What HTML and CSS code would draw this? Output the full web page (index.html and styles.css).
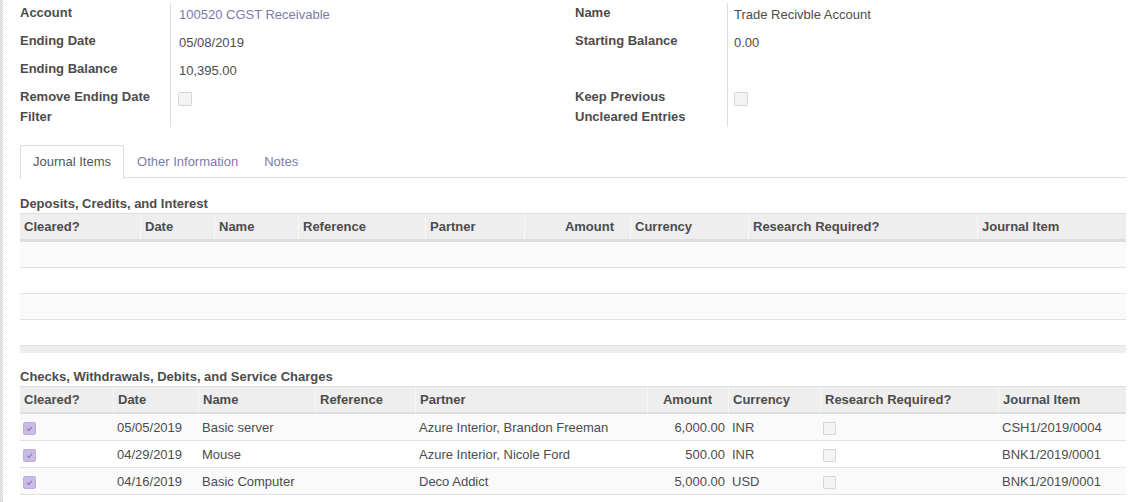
FILE: index.html
```html
<!DOCTYPE html>
<html>
<head>
<meta charset="utf-8">
<link rel="stylesheet" href="styles.css">
</head>
<body>
<div class="layout">
  <div class="edge"></div>
  <div class="sheet">
    <div class="groups">
      <div class="fgroup left">
        <div class="lbl">Account</div><div class="val"><span class="link">100520 CGST Receivable</span></div>
        <div class="lbl">Ending Date</div><div class="val">05/08/2019</div>
        <div class="lbl">Ending Balance</div><div class="val">10,395.00</div>
        <div class="lbl last">Remove Ending Date Filter</div><div class="val last"><span class="chk"></span></div>
      </div>
      <div class="fgroup right">
        <div class="lbl">Name</div><div class="val">Trade Recivble Account</div>
        <div class="lbl">Starting Balance</div><div class="val">0.00</div>
        <div class="lbl">&nbsp;</div><div class="val">&nbsp;</div>
        <div class="lbl last">Keep Previous Uncleared Entries</div><div class="val last"><span class="chk"></span></div>
      </div>
    </div>

    <div class="tabs">
      <div class="tab active">Journal Items</div>
      <div class="tab">Other Information</div>
      <div class="tab">Notes</div>
    </div>

    <div class="sec-title first">Deposits, Credits, and Interest</div>
    <table class="list t1">
      <colgroup><col><col><col><col><col><col><col><col><col></colgroup>
      <thead>
        <tr><th>Cleared?</th><th>Date</th><th>Name</th><th>Reference</th><th>Partner</th><th class="num">Amount</th><th>Currency</th><th>Research Required?</th><th>Journal Item</th></tr>
      </thead>
      <tbody>
        <tr><td>&nbsp;</td><td></td><td></td><td></td><td></td><td></td><td></td><td></td><td></td></tr>
        <tr><td>&nbsp;</td><td></td><td></td><td></td><td></td><td></td><td></td><td></td><td></td></tr>
        <tr><td>&nbsp;</td><td></td><td></td><td></td><td></td><td></td><td></td><td></td><td></td></tr>
        <tr><td>&nbsp;</td><td></td><td></td><td></td><td></td><td></td><td></td><td></td><td></td></tr>
      </tbody>
      <tfoot>
        <tr><td colspan="9"><div class="foot"></div></td></tr>
      </tfoot>
    </table>

    <div class="sec-title second">Checks, Withdrawals, Debits, and Service Charges</div>
    <table class="list t2">
      <colgroup><col><col><col><col><col><col><col><col><col></colgroup>
      <thead>
        <tr><th>Cleared?</th><th>Date</th><th>Name</th><th>Reference</th><th>Partner</th><th class="num">Amount</th><th>Currency</th><th>Research Required?</th><th>Journal Item</th></tr>
      </thead>
      <tbody>
        <tr><td class="cb"><span class="chk on"><svg viewBox="0 0 12 12"><polyline points="3.5,6.3 5.3,8 8.6,4.3"/></svg></span></td><td>05/05/2019</td><td>Basic server</td><td></td><td>Azure Interior, Brandon Freeman</td><td class="num">6,000.00</td><td>INR</td><td class="cb"><span class="chk"></span></td><td>CSH1/2019/0004</td></tr>
        <tr><td class="cb"><span class="chk on"><svg viewBox="0 0 12 12"><polyline points="3.5,6.3 5.3,8 8.6,4.3"/></svg></span></td><td>04/29/2019</td><td>Mouse</td><td></td><td>Azure Interior, Nicole Ford</td><td class="num">500.00</td><td>INR</td><td class="cb"><span class="chk"></span></td><td>BNK1/2019/0001</td></tr>
        <tr><td class="cb"><span class="chk on"><svg viewBox="0 0 12 12"><polyline points="3.5,6.3 5.3,8 8.6,4.3"/></svg></span></td><td>04/16/2019</td><td>Basic Computer</td><td></td><td>Deco Addict</td><td class="num">5,000.00</td><td>USD</td><td class="cb"><span class="chk"></span></td><td>BNK1/2019/0001</td></tr>
      </tbody>
    </table>
  </div>
</div>
</body>
</html>
```

FILE: styles.css
```css
* { box-sizing: border-box; }
html, body { margin: 0; padding: 0; background: #fff; }
body {
  font-family: "Liberation Sans", Arial, sans-serif;
  font-size: 13px;
  color: #4c4c4c;
}
.layout { display: flex; min-height: 502px; }
.edge {
  width: 3px;
  flex: none;
  background-image:
    linear-gradient(45deg, #cfcfcf 25%, transparent 25%, transparent 75%, #cfcfcf 75%),
    linear-gradient(45deg, #cfcfcf 25%, #f2f2f2 25%, #f2f2f2 75%, #cfcfcf 75%);
  background-size: 2px 2px;
  background-position: 0 0, 1px 1px;
}
.sheet { flex: 1; padding: 3px 14px 0 17px; overflow: hidden; }

/* form groups */
.groups { display: grid; grid-template-columns: 555px 1fr; }
.fgroup { display: grid; }
.fgroup.left { grid-template-columns: 151px 1fr; }
.fgroup.right { grid-template-columns: 153px 1fr; }
.lbl {
  font-weight: bold;
  line-height: 20px;
  padding: 0 10px 8px 0;
  border-right: 1px solid #ddd;
}
.val { line-height: 20px; padding: 2px 0 6px 8px; color: #4c4c4c; }
.fgroup.right .val { padding-left: 6px; }
.lbl.last { padding-bottom: 0; }
.val.last { padding-bottom: 0; padding-top: 5px; }
.fgroup.left .val.last { padding-left: 7px; }
.link { color: #7c7bad; }
.chk {
  display: inline-block;
  width: 14px;
  height: 14px;
  border: 1px solid #d6d6d6;
  background: #f4f4f4;
  border-radius: 1px;
  vertical-align: top;
}

/* tabs */
.tabs {
  display: flex;
  margin-top: 18px;
  border-bottom: 1px solid #ddd;
  height: 33px;
}
.tab {
  padding: 6px 12px;
  line-height: 20px;
  border: 1px solid transparent;
  border-bottom: none;
  color: #7c7bad;
  height: 33px;
}
.tab.active {
  color: #555;
  border-color: #ddd;
  border-radius: 3px 3px 0 0;
  background: #fff;
  margin-bottom: -1px;
  height: 34px;
}

/* section titles */
.sec-title { font-weight: bold; line-height: 18px; }
.sec-title.first { margin-top: 17px; }
.sec-title.second { margin-top: 15px; }

/* lists */
table.list {
  width: 100%;
  table-layout: fixed;
  border-collapse: separate;
  border-spacing: 0;
}
.list th {
  background: #eeeeee;
  font-weight: bold;
  text-align: left;
  line-height: 25px;
  padding: 0 4px;
  border-top: 1px solid #dddddd;
  border-bottom: 2px solid #dcdde3;
  border-left: 1px solid #f7f7f7;
  white-space: nowrap;
  overflow: hidden;
}
.t1 th { border-bottom-width: 3px; }
.list th:first-child { border-left: none; }
.list th.num { text-align: right; padding-right: 16px; }
.list td {
  padding: 0 4px;
  line-height: 25px;
  border-bottom: 1px solid #e2e2e2;
  white-space: nowrap;
  overflow: hidden;
  vertical-align: middle;
}
.t2 td { line-height: 25px; padding-top: 1px; }
.list tbody tr:nth-child(odd) td { background: #fafafa; }
.list td.num { text-align: right; padding-right: 3px; }
.list td.cb { padding-left: 3px; }
.list td .chk { vertical-align: middle; width: 13px; height: 13px; }
.list td .chk.on {
  background: #c8bbe4;
  border-color: #bcaedc;
  border-radius: 2px;
  display: inline-flex;
}
.chk.on svg { width: 11px; height: 11px; }
.chk.on polyline { fill: none; stroke: #8a79bc; stroke-width: 1.3; }
.list tfoot td {
  background: #eeeeee;
  line-height: 0;
  padding: 0;
  border-bottom: none;
}
.foot { height: 7px; }

.t1 col:nth-child(1) { width: 120px; }
.t1 col:nth-child(2) { width: 74px; }
.t1 col:nth-child(3) { width: 84px; }
.t1 col:nth-child(4) { width: 127px; }
.t1 col:nth-child(5) { width: 99px; }
.t1 col:nth-child(6) { width: 106px; }
.t1 col:nth-child(7) { width: 118px; }
.t1 col:nth-child(8) { width: 229px; }
.t1 col:nth-child(9) { width: 149px; }

.t2 col:nth-child(1) { width: 93px; }
.t2 col:nth-child(2) { width: 85px; }
.t2 col:nth-child(3) { width: 117px; }
.t2 col:nth-child(4) { width: 100px; }
.t2 col:nth-child(5) { width: 232px; }
.t2 col:nth-child(6) { width: 81px; }
.t2 col:nth-child(7) { width: 92px; }
.t2 col:nth-child(8) { width: 178px; }
.t2 col:nth-child(9) { width: 128px; }
```
